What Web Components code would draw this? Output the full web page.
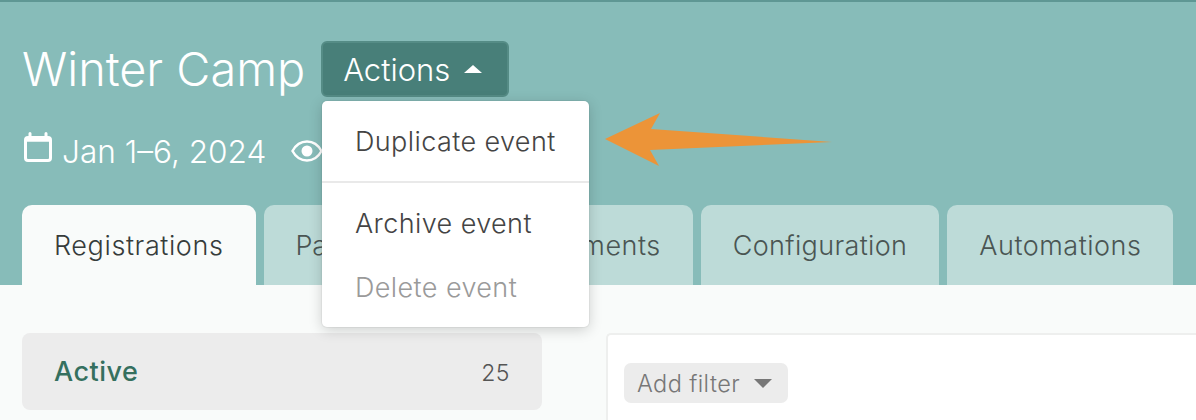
<!DOCTYPE html>
<html><head><meta charset="utf-8">
<style>
html,body{margin:0;padding:0;}
body{width:1196px;height:420px;overflow:hidden;background:#f9fbfa;font-family:Inter,"Liberation Sans",sans-serif;}
</style></head><body>
<event-page></event-page>
<script>
function def(name,html){
  customElements.define(name,class extends HTMLElement{
    constructor(){super();const r=this.attachShadow({mode:'open'});r.innerHTML=html;}
  });
}
def('event-tab',`<style>
:host{display:block;height:80px;box-sizing:border-box;padding:26px 32px 0;background:#bddbd8;border-radius:10px 10px 0 0;color:#4a5553;font-size:27px;font-weight:350;line-height:30px;white-space:nowrap;letter-spacing:var(--ls,.5px)}
:host([active]){background:#f9fbfa;color:#363c3b}
</style><slot></slot>`);
def('menu-item',`<style>
:host{display:block;padding:0 33px;height:64px;line-height:64px;font-size:27px;font-weight:350;color:#444;white-space:nowrap;letter-spacing:.4px}
:host([muted]){color:#9a9a9a}
</style><slot></slot>`);
def('actions-menu',`<style>
:host{display:block;position:absolute;left:322px;top:101px;width:267px;height:226px;box-sizing:border-box;background:#fff;border-radius:5px;box-shadow:0 0 0 1px rgba(0,0,0,.04),0 3px 14px rgba(0,0,0,.18);z-index:5}
.a{height:80px;padding-top:9px;box-sizing:border-box}
.d{height:2px;background:#e9e9e9}
.b{padding-top:9px}
</style>
<div class="a"><menu-item>Duplicate event</menu-item></div><div class="d"></div>
<div class="b"><menu-item>Archive event</menu-item><menu-item muted>Delete event</menu-item></div>`);
def('event-header',`<style>
:host{display:block;height:285px;box-sizing:border-box;background:#87bcb9;border-top:2px solid #5f9794;padding:39px 22px 0}
.top{display:flex;align-items:center;height:56px;gap:16px}
h1{margin:0;font-size:46.800px;font-weight:300;color:#fff;line-height:56px;white-space:nowrap}
.btn{display:flex;align-items:center;gap:14px;height:56px;width:188px;box-sizing:border-box;padding:0 20px;background:#487f79;border:2px solid #558c86;border-radius:6px;color:#fff;font-size:31px;font-weight:300}
.meta{display:flex;align-items:center;height:36px;margin-top:36px;color:#fff;font-size:31.600px;font-weight:300;white-space:nowrap}
.meta svg{flex:none}
.tabs{display:flex;gap:8px;margin-top:36px}
</style>
<div class="top"><h1>Winter Camp</h1><div class="btn">Actions<svg width="18" height="8" viewBox="0 0 18 8"><path d="M9 0 18 8H0Z" fill="#fff"/></svg></div></div>
<div class="meta"><svg width="32" height="32" viewBox="0 0 32 32" style="margin-right:8px;align-self:flex-start;margin-top:-1px"><path d="M8 1.500v4M24 1.500v4" stroke="#fff" stroke-width="3" stroke-linecap="round"/><rect x="3.500" y="5.500" width="25" height="23" rx="2.500" fill="none" stroke="#fff" stroke-width="3"/><path d="M3 7.500h26" stroke="#fff" stroke-width="4.500"/></svg><span>Jan 1–6, 2024</span><svg width="32" height="24" viewBox="0 0 32 24" style="margin-left:25px"><path d="M1.500 12C5 5.500 10 2.500 16 2.500S27 5.500 30.500 12C27 18.500 22 21.500 16 21.500S5 18.500 1.500 12Z" fill="none" stroke="#fff" stroke-width="2.500"/><circle cx="16" cy="12" r="5.500" fill="#fff"/></svg></div>
<div class="tabs"><event-tab active style="--ls:.6px">Registrations</event-tab><event-tab style="--ls:-.1px">Participants</event-tab><event-tab>Documents</event-tab><event-tab style="--ls:.35px">Configuration</event-tab><event-tab>Automations</event-tab></div>`);
def('side-row',`<style>
:host{display:flex;justify-content:space-between;align-items:center;width:520px;height:77px;box-sizing:border-box;padding:0 32px 0 32px;background:#ececec;border-radius:8px}
b{font-size:27px;font-weight:550;color:#35705f;letter-spacing:.5px}
span{font-size:23px;font-weight:350;color:#555;letter-spacing:.5px;padding-top:3px}
</style><b><slot></slot></b><span>25</span>`);
def('filter-panel',`<style>
:host{display:block;flex:1;height:120px;box-sizing:border-box;background:#fff;border:2px solid #eeefee;border-right:0;border-radius:5px 0 0 0;padding:28px 16px}
.f{display:inline-flex;align-items:center;gap:14px;height:40px;box-sizing:border-box;padding:0 16px 0 13px;background:#ececec;border-radius:7px;color:#777;font-size:23.500px;font-weight:350;letter-spacing:.4px}
</style><div class="f">Add filter<svg width="18" height="9" viewBox="0 0 18 9"><path d="M0 0H18L9 9Z" fill="#777"/></svg></div>`);
def('event-body',`<style>
:host{display:flex;gap:64px;padding:48px 0 0 22px;height:135px;box-sizing:border-box;overflow:hidden}
</style><side-row>Active</side-row><filter-panel></filter-panel>`);
def('event-page',`<style>
:host{display:block;position:relative;width:1196px;height:420px;overflow:hidden}
svg.arrow{position:absolute;left:0;top:0;z-index:6;pointer-events:none}
</style>
<event-header></event-header><event-body></event-body><actions-menu></actions-menu>
<svg class="arrow" width="1196" height="420"><polygon points="605,139 660,113 651,129 832,142 650,150 659,166" fill="#ec9438"/></svg>`);
</script>
</body></html>
